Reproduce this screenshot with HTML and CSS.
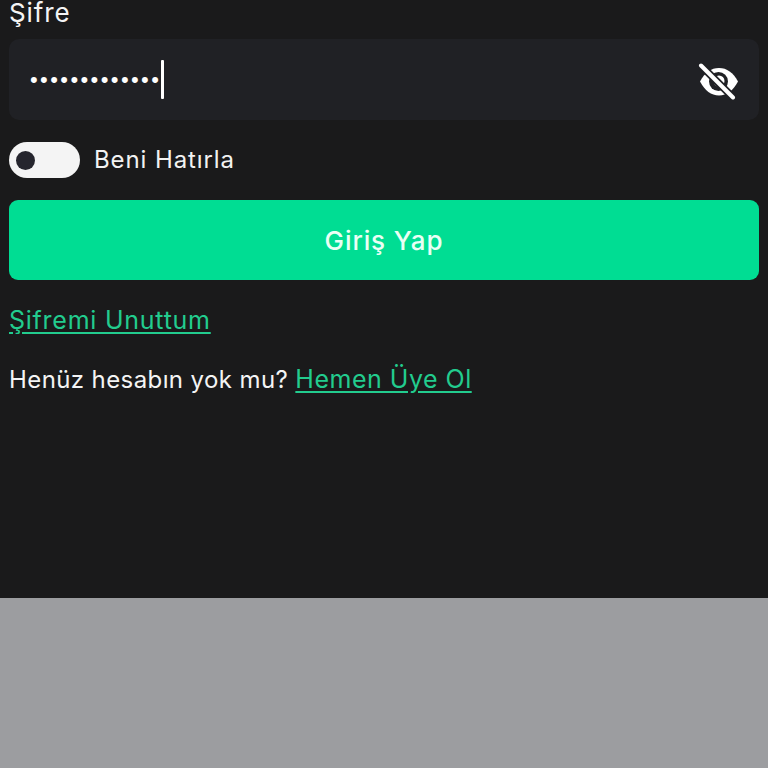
FILE: index.html
```html
<!DOCTYPE html>
<html lang="en">
<head>
  <meta charset="UTF-8">
  <meta name="viewport" content="width=device-width, initial-scale=1.0">
  <title>Giriş Yap</title>
  <link rel="stylesheet" href="styles.css">
</head>
<body>
  <div class="panel">
    <div class="field-label">Şifre</div>
    <div class="password-box">
      <div class="password-value">
        <span class="dots">•••••••••••••</span>
        <span class="caret"></span>
      </div>
      <svg class="eye-icon" width="44" height="40" viewBox="0 0 44 40">
        <path d="M5 21.500C10 12.500 16 8 24 8S38 12.500 43 21.500C38 30.500 32 35.500 24 35.500S10 30.500 5 21.500Z" fill="#fff"/>
        <circle cx="23.500" cy="21.500" r="9.500" fill="#1f2024"/>
        <circle cx="24" cy="21" r="5.500" fill="#fff"/>
        <path d="M6 5.500L38 37.500" stroke="#1f2024" stroke-width="7.500"/>
        <path d="M6 5.500L38 37.500" stroke="#fff" stroke-width="4" stroke-linecap="round"/>
      </svg>
    </div>
    <div class="remember">
      <div class="toggle"><span class="knob"></span></div>
      <span class="remember-text">Beni Hatırla</span>
    </div>
    <button class="login-btn">Giriş Yap</button>
    <a class="link forgot" href="#">Şifremi Unuttum</a>
    <p class="signup">Henüz hesabın yok mu? <a class="link signup-link" href="#">Hemen Üye Ol</a></p>
  </div>
</body>
</html>
```
FILE: styles.css
```css
* {
  box-sizing: border-box;
}

body {
  margin: 0;
  height: 768px;
  background-color: #9c9da0;
  overflow: hidden;
  font-family: "Inter", "Liberation Sans", sans-serif;
}

.panel {
  height: 598px;
  padding: 0 9px;
  background-color: #1a1a1b;
  overflow: hidden;
  color: #fff;
  display: flex;
  flex-direction: column;
  align-items: flex-start;
}

.field-label {
  height: 39px;
  font-size: 26px;
  letter-spacing: 0.9px;
  line-height: 26px;
  color: #f4f4f4;
}

.password-box {
  width: 100%;
  height: 81px;
  padding: 0 20px 0 21px;
  background-color: #202125;
  border-radius: 10px;
  display: flex;
  align-items: center;
  justify-content: space-between;
}

.password-value {
  display: flex;
  align-items: center;
}

.dots {
  font-family: "Liberation Sans", sans-serif;
  font-size: 22px;
  letter-spacing: 2.400px;
  line-height: 20px;
}

.caret {
  width: 3px;
  height: 39px;
  background-color: #fff;
  border-radius: 1px;
}

.remember {
  margin-top: 22px;
  display: flex;
  align-items: center;
  gap: 14px;
}

.toggle {
  width: 71px;
  height: 36px;
  padding-left: 7px;
  background-color: #f4f4f4;
  border-radius: 18px;
  display: flex;
  align-items: center;
}

.knob {
  width: 19px;
  height: 19px;
  background-color: #25252d;
  border-radius: 50%;
}

.remember-text {
  font-size: 24px;
  line-height: 34px;
  letter-spacing: 0.9px;
  color: #f2f2f2;
}

.login-btn {
  width: 100%;
  height: 80px;
  margin-top: 22px;
  background-color: #00dd93;
  border: none;
  border-radius: 9px;
  color: #eafff5;
  font-family: inherit;
  font-size: 26px;
  font-weight: 500;
  letter-spacing: 0.9px;
}

.link {
  color: #22cc8e;
  text-decoration: underline;
  text-underline-offset: 3px;
}

.forgot {
  margin-top: 24px;
  font-size: 25px;
  letter-spacing: 0.75px;
  line-height: 32px;
}

.signup {
  margin: 27px 0 0;
  font-size: 24px;
  letter-spacing: 0.4px;
  line-height: 32px;
  color: #f4f4f4;
}

.signup-link {
  font-size: 25px;
  letter-spacing: 0.5px;
}
```
